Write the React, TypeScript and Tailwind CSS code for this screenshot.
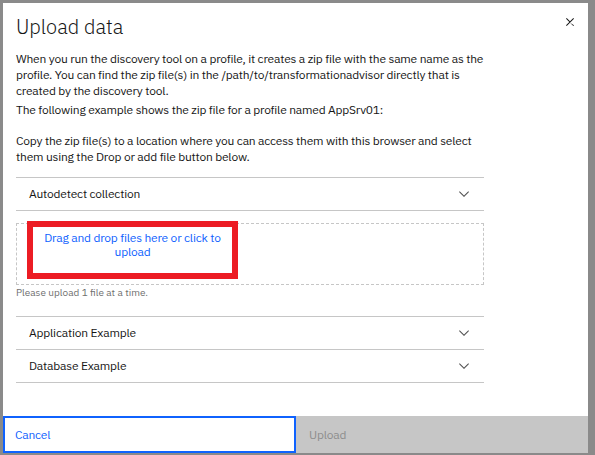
import React from 'react'

const font = { fontFamily: '"IBM Plex Sans", Roboto, "Noto Sans", sans-serif' }

function Chevron() {
  return (
    <svg width="16" height="16" viewBox="0 0 16 16" className="text-[#525252]" fill="currentColor">
      <path d="M8 11L3 6 3.7 5.3 8 9.6 12.3 5.3 13 6z" />
    </svg>
  )
}

function AccordionItem({ title }: { title: string }) {
  return (
    <div className="flex h-[33px] items-center justify-between border-b border-[#c6c6c6] pl-[13px] pr-[12px]">
      <span className="text-[12px] text-[#161616]">{title}</span>
      <Chevron />
    </div>
  )
}

export default function App() {
  return (
    <div
      className="h-[455px] w-[595px] bg-[#8a8a8a] pb-[2px] pl-[3px] pr-[7px] pt-[3px]"
      style={font}>
      <div className="flex h-full flex-col bg-white">
        <div className="flex items-start justify-between pl-[13px] pr-[10px] pt-[10px]">
          <h2 className="text-[20px] font-light leading-[28px] text-[#161616]">Upload data</h2>
          <button className="mt-[1px] text-[#161616]">
            <svg width="16" height="16" viewBox="0 0 16 16" fill="currentColor">
              <path d="M12 4.7L11.3 4 8 7.3 4.7 4 4 4.7 7.3 8 4 11.3 4.7 12 8 8.7 11.3 12 12 11.3 8 8.7z" />
            </svg>
          </button>
        </div>

        <div className="pl-[13px] pt-[10px] text-[12px] leading-[16px] tracking-[-0.2px] text-[#161616]">
          <div className="w-[472px]">
            <p>
              When you run the discovery tool on a profile, it creates a zip file with the same name as the
              profile. You can find the zip file(s) in the /path/to/transformationadvisor directly that is
              created by the discovery tool.
            </p>
            <p className="mt-[3px]">The following example shows the zip file for a profile named AppSrv01:</p>
            <p className="mt-[15px]">
              Copy the zip file(s) to a location where you can access them with this browser and select
              them using the Drop or add file button below.
            </p>
          </div>

          <div className="w-[468px]">
            <div className="mt-[12px] border-t border-[#c6c6c6]">
              <AccordionItem title="Autodetect collection" />
            </div>

            <div className="relative mt-[12px] h-[62px] border border-dashed border-[#c6c6c6]">
              <div className="absolute left-[10px] top-[-3px] h-[58px] w-[211px] border-[6px] border-[#ec1c24] pt-[4px] text-center text-[12px] leading-[14px] text-[#0f62fe]">
                Drag and drop files here or click to upload
              </div>
            </div>
            <p className="mt-[1px] text-[10px] leading-[14px] tracking-normal text-[#6f6f6f]">
              Please upload 1 file at a time.
            </p>

            <div className="mt-[16px] border-t border-[#c6c6c6]">
              <AccordionItem title="Application Example" />
              <AccordionItem title="Database Example" />
            </div>
          </div>
        </div>

        <div className="mt-auto flex h-[37px] tracking-[-0.2px]">
          <button className="h-full w-[293px] border-2 border-[#0f62fe] bg-white pl-[10px] text-left text-[12px] text-[#0f62fe]">
            Cancel
          </button>
          <button className="h-full flex-1 bg-[#c6c6c6] pl-[13px] text-left text-[12px] text-[#8d8d8d]">
            Upload
          </button>
        </div>
      </div>
    </div>
  )
}
